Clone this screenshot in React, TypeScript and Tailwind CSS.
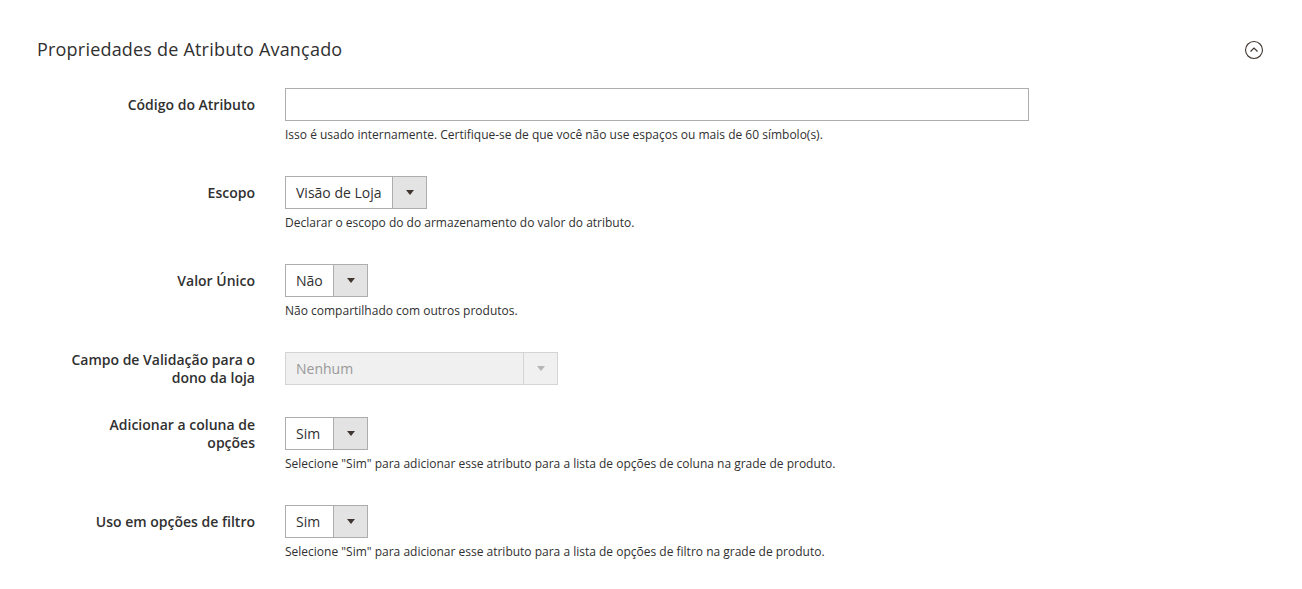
import React from "react";

type Row = {
  label: string[];
  kind: "input" | "select";
  value?: string;
  width?: string;
  disabled?: boolean;
  note?: string;
};

const rows: Row[] = [
  {
    label: ["Código do Atributo"],
    kind: "input",
    note: "Isso é usado internamente. Certifique-se de que você não use espaços ou mais de 60 símbolo(s).",
  },
  {
    label: ["Escopo"],
    kind: "select",
    value: "Visão de Loja",
    width: "w-[142px]",
    note: "Declarar o escopo do do armazenamento do valor do atributo.",
  },
  {
    label: ["Valor Único"],
    kind: "select",
    value: "Não",
    width: "w-[83px]",
    note: "Não compartilhado com outros produtos.",
  },
  {
    label: ["Campo de Validação para o", "dono da loja"],
    kind: "select",
    value: "Nenhum",
    width: "w-[273px]",
    disabled: true,
  },
  {
    label: ["Adicionar a coluna de", "opções"],
    kind: "select",
    value: "Sim",
    width: "w-[83px]",
    note: 'Selecione "Sim" para adicionar esse atributo para a lista de opções de coluna na grade de produto.',
  },
  {
    label: ["Uso em opções de filtro"],
    kind: "select",
    value: "Sim",
    width: "w-[83px]",
    note: 'Selecione "Sim" para adicionar esse atributo para a lista de opções de filtro na grade de produto.',
  },
];

function Select({ value, width, disabled }: { value?: string; width?: string; disabled?: boolean }) {
  return (
    <div
      className={`${width} h-[33px] flex border ${
        disabled ? "border-[#d4d4d4] bg-[#f0f0f0] text-[#999]" : "border-[#adadad] bg-white text-[#303030]"
      }`}
    >
      <div className="flex-1 flex items-center pl-[10px] text-[14px]">{value}</div>
      <div
        className={`w-[34px] flex items-center justify-center border-l ${
          disabled ? "border-[#d4d4d4] bg-[#f0f0f0]" : "border-[#adadad] bg-[#e3e3e3]"
        }`}
      >
        <svg width="8" height="5" viewBox="0 0 8 5">
          <path d="M0 0 L8 0 L4 5 Z" fill={disabled ? "#b5b5b5" : "#41362f"} />
        </svg>
      </div>
    </div>
  );
}

export default function App() {
  return (
    <div className="min-h-[589px] bg-white px-[37px] pt-[37px] font-['Open_Sans',sans-serif] text-[#303030]">
      <div className="flex items-center justify-between h-[24px]">
        <h2 className="text-[18px] leading-[24px] font-medium text-[#303030] tracking-[0.2px]">
          Propriedades de Atributo Avançado
        </h2>
        <svg width="20" height="20" viewBox="0 0 20 20" className="mr-[1px] mt-[2px]">
          <circle cx="10" cy="10" r="8.5" fill="none" stroke="#41362f" strokeWidth="1.1" />
          <path d="M6.5 11.5 L10 8 L13.5 11.5" fill="none" stroke="#41362f" strokeWidth="1.2" />
        </svg>
      </div>

      <div className="mt-[27px] flex flex-col gap-[32px]">
        {rows.map((row, i) => (
          <div key={i} className="flex gap-[30px]">
            <div className="w-[218px] h-[33px] flex items-center justify-end">
              <label className="text-right text-[14px] leading-[18px] font-semibold text-[#303030]">
                {row.label.map((l, j) => (
                  <div key={j}>{l}</div>
                ))}
              </label>
            </div>
            <div className="flex flex-col">
              {row.kind === "input" ? (
                <input className="w-[744px] h-[33px] border border-[#adadad] bg-white outline-none" />
              ) : (
                <Select value={row.value} width={row.width} disabled={row.disabled} />
              )}
              {row.note && <div className="mt-[5px] text-[12px] leading-[18px] text-[#303030]">{row.note}</div>}
            </div>
          </div>
        ))}
      </div>
    </div>
  );
}
